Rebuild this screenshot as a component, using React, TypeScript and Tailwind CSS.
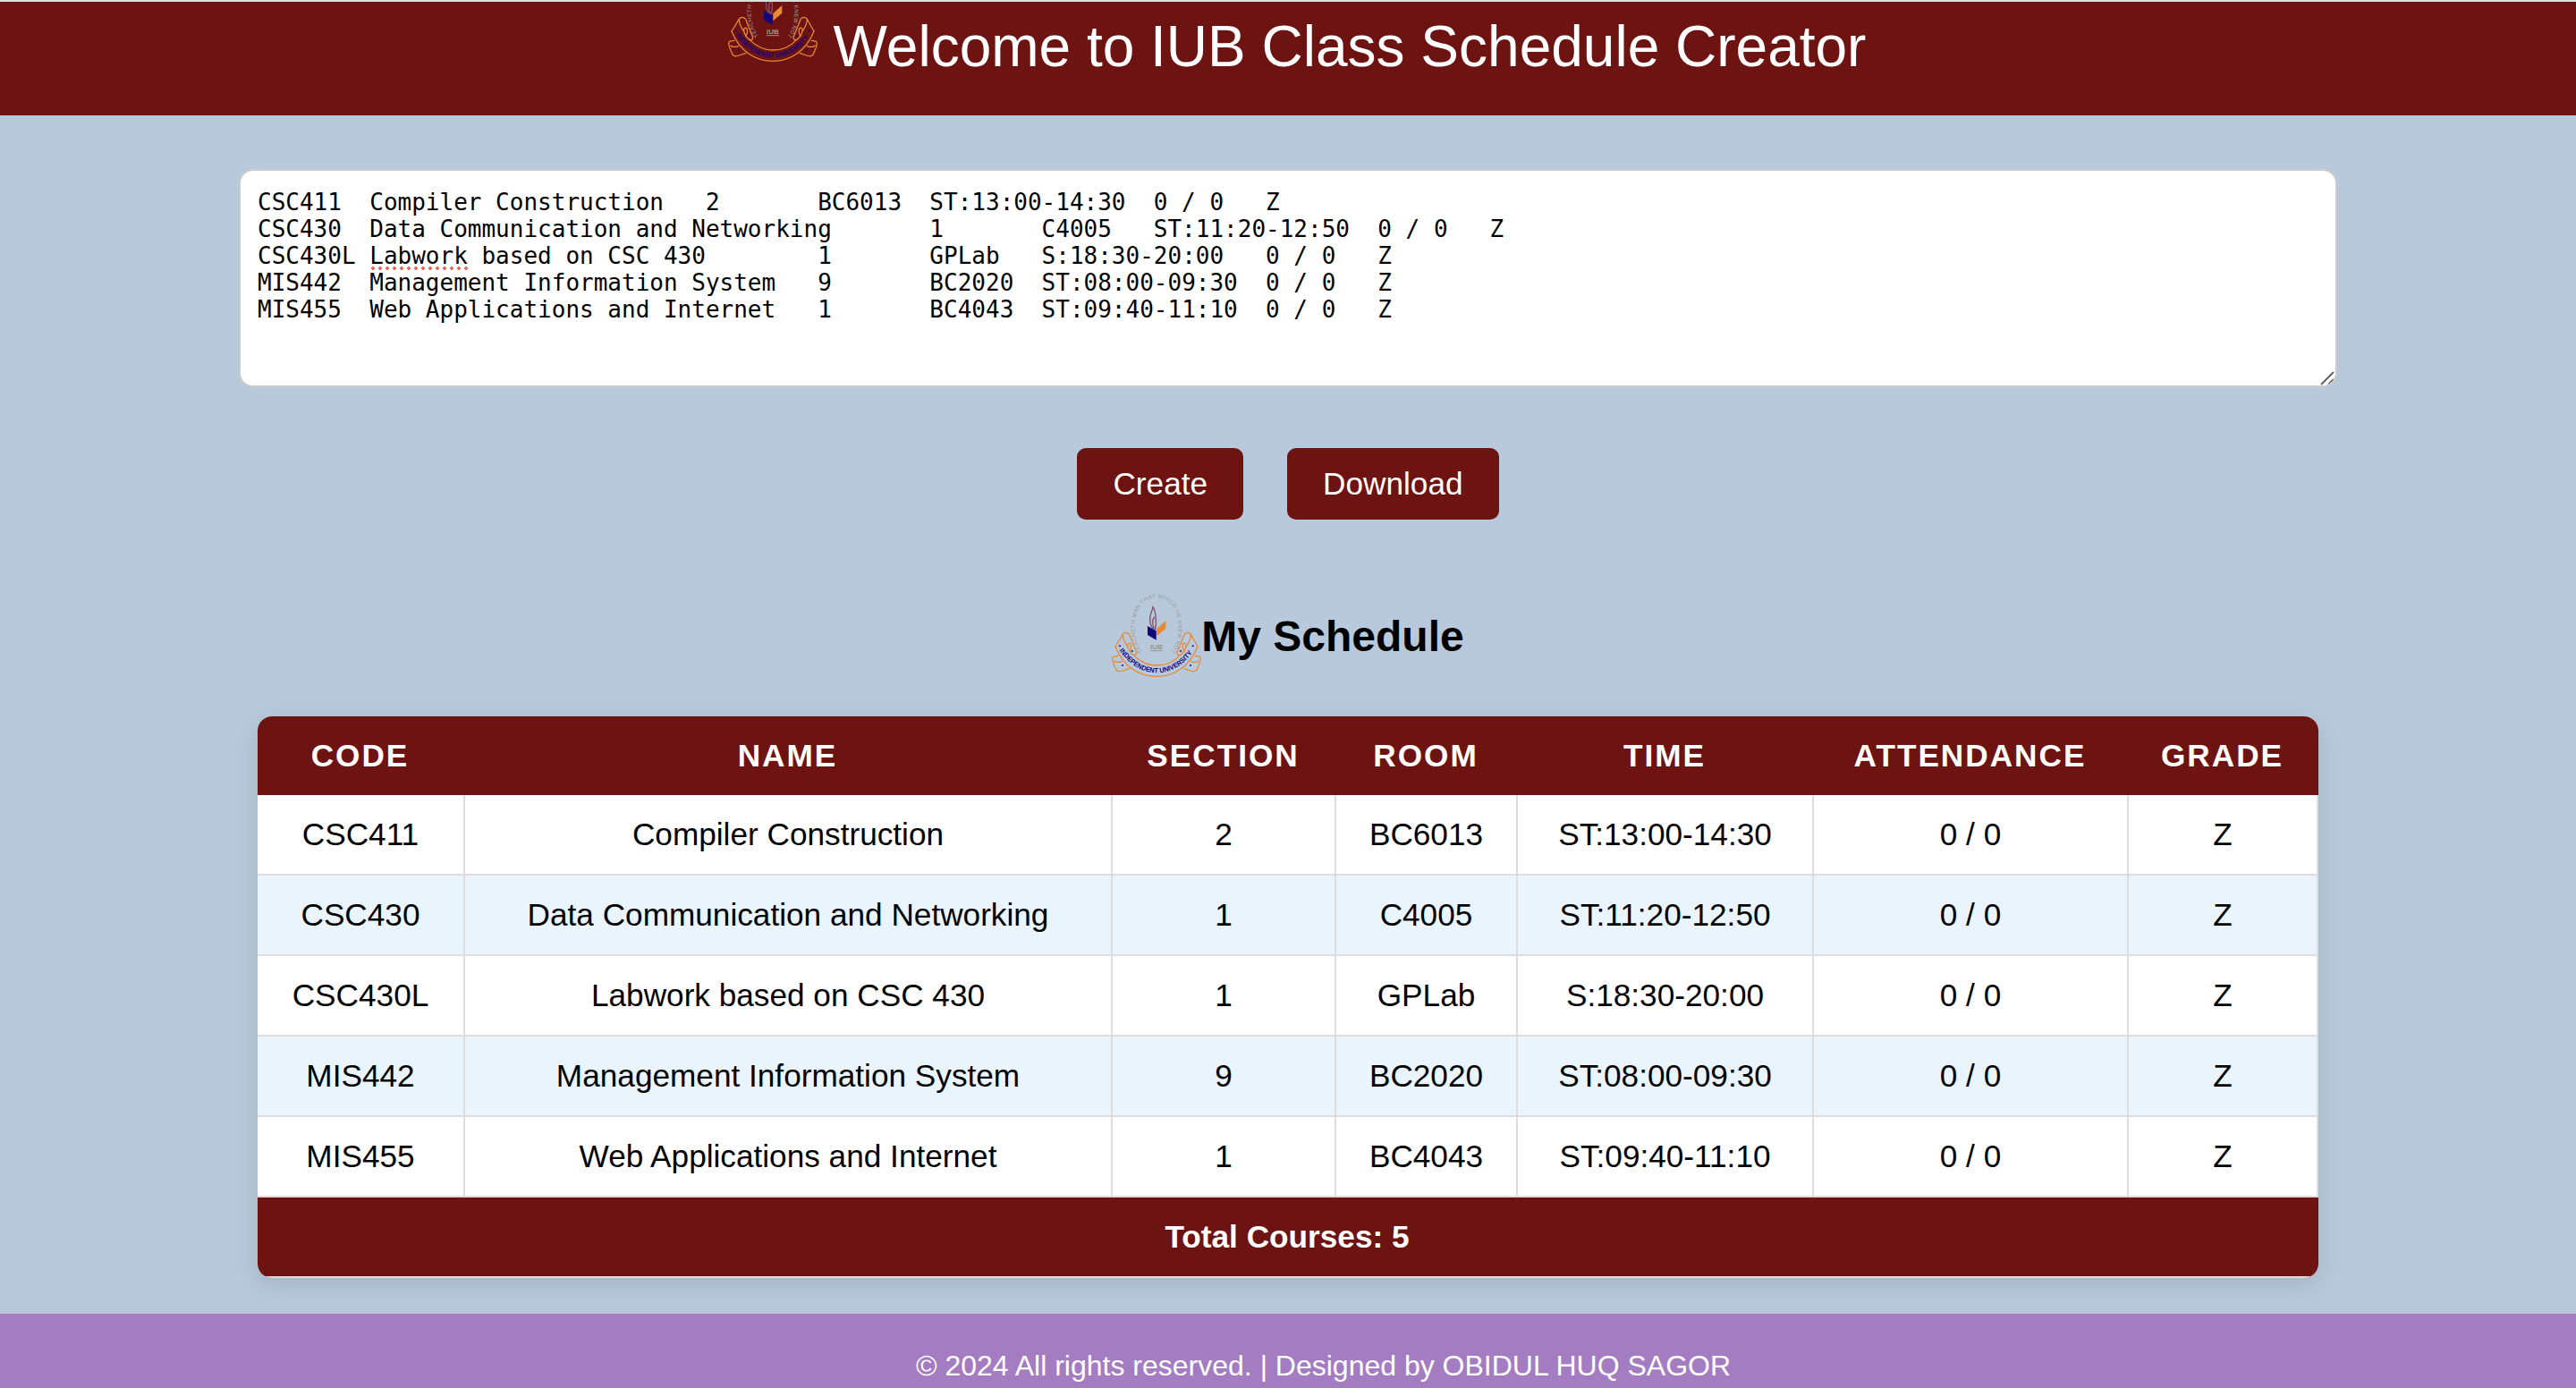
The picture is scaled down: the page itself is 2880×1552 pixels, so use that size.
import { useId } from "react";

const pasted = [
  ["CSC411", "Compiler Construction", "2", "BC6013", "ST:13:00-14:30", "0 / 0", "Z"],
  ["CSC430", "Data Communication and Networking", "1", "C4005", "ST:11:20-12:50", "0 / 0", "Z"],
  ["CSC430L", "Labwork based on CSC 430", "1", "GPLab", "S:18:30-20:00", "0 / 0", "Z"],
  ["MIS442", "Management Information System", "9", "BC2020", "ST:08:00-09:30", "0 / 0", "Z"],
  ["MIS455", "Web Applications and Internet", "1", "BC4043", "ST:09:40-11:10", "0 / 0", "Z"],
];

const headings = ["Code", "Name", "Section", "Room", "Time", "Attendance", "Grade"];

function Crest({ className }: { className: string }) {
  const id = useId();
  return (
    <svg viewBox="69 39 300 279" className={className} fill="none">
      <defs>
        <path id={`${id}-motto`} d="M172 231 C134 195 130 52 219 54 C308 52 304 195 267 233" />
        <path id={`${id}-name`} d="M94 229 Q150 304 220 304 Q290 304 344 231" />
      </defs>
      <text fill="#9a9c9f" fontSize="19" fontFamily="Liberation Sans, sans-serif">
        <textPath href={`#${id}-motto`} textLength="446" lengthAdjust="spacing">
          TEACHETH MAN THAT WHICH HE KNEW NOT
        </textPath>
      </text>
      <path d="M207 83 C205 98 195 108 197 128 C198 144 206 155 215 157 C219 140 218 98 207 83Z M210 152 C204 138 206 124 212 116" stroke="#80506f" strokeWidth="4" />
      <path d="M189 147 L218 163 V194 L189 177Z" fill="#14067c" />
      <path d="M220 156 L250 129 V155 L220 181Z" fill="#e58a35" />
      <text x="219" y="224" textAnchor="middle" fill="#929698" fontSize="21" fontWeight="700" fontFamily="Liberation Sans, sans-serif" textLength="42" lengthAdjust="spacingAndGlyphs">
        IUB
      </text>
      <path d="M198 230 H240" stroke="#929698" strokeWidth="3" />
      <g stroke="#e58a35" strokeWidth="3.8" strokeLinejoin="round" strokeLinecap="round">
        <path d="M81 216 L106 175 C112 166 128 168 130 181 L152 236 C153 243 148 246 141 244" />
        <path d="M106 175 C106 190 112 203 122 216 C126 230 134 240 141 244" />
        <path d="M122 216 C120 204 130 200 133 210 C135 220 131 228 128 231" />
        <path d="M357 216 L334 175 C328 166 312 168 310 181 L288 236 C287 243 292 246 299 244" />
        <path d="M334 175 C334 190 328 203 318 216 C314 230 306 240 299 244" />
        <path d="M318 216 C320 204 310 200 307 210 C305 220 309 228 312 231" />
        <path d="M81 216 C108 283 160 316 219 316 C278 316 330 283 357 216" />
        <path d="M141 244 C165 268 190 279 219 279 C250 279 277 268 299 244" />
        <path d="M90 247 L73 250 C68 257 72 266 76 276 L84 294 C90 302 98 300 106 297 L129 289 M78 264 C84 272 96 268 104 266" />
        <path d="M349 247 L365 250 C370 257 366 266 362 276 L354 294 C348 302 340 300 332 297 L310 289 M360 264 C354 272 342 268 334 266" />
      </g>
      <g fill="#14067c">
        <circle cx="96" cy="214" r="3" />
        <circle cx="137" cy="231" r="3" />
        <circle cx="105" cy="279" r="3" />
        <circle cx="341" cy="214" r="3" />
        <circle cx="300" cy="231" r="3" />
        <circle cx="333" cy="279" r="3" />
      </g>
      <text fill="#14067c" fontSize="23" fontWeight="700" fontFamily="Liberation Sans, sans-serif">
        <textPath href={`#${id}-name`} textLength="294" lengthAdjust="spacingAndGlyphs">
          INDEPENDENT UNIVERSITY
        </textPath>
      </text>
    </svg>
  );
}

function PastedLine({ cells }: { cells: string[] }) {
  const line = cells.join("\t");
  const at = line.indexOf("Labwork");
  if (at < 0) return <div>{line}</div>;
  return (
    <div>
      {line.slice(0, at)}
      <span className="relative">
        Labwork
        <span className="absolute -bottom-[1px] left-0 h-1 w-full bg-[radial-gradient(circle_at_center,#f0675f_1.6px,transparent_2.1px)] bg-[length:8px_4px]" />
      </span>
      {line.slice(at + 7)}
    </div>
  );
}

export default function App() {
  return (
    <div className="flex h-[1552px] w-[2880px] flex-col overflow-hidden bg-[#b8c9db] font-['Liberation_Sans',Arial,sans-serif] text-black">
      <header className="flex h-[129px] shrink-0 items-start justify-center overflow-hidden border-t-2 border-[#dddddd] bg-[#6d1312] pl-[20px]">
        <Crest className="-mt-[26px] h-[93px] w-[100px] shrink-0" />
        <h1 className="ml-[18px] mt-[13px] whitespace-nowrap text-[64px] leading-[74px] text-white">
          Welcome to IUB Class Schedule Creator
        </h1>
      </header>

      <main className="flex shrink-0 flex-col items-center">
        <div className="relative mt-[60px] h-[244px] w-[2346px] overflow-hidden rounded-[16px] border-2 border-[#cccccc] bg-white px-[18px] py-[20px]">
          <div className="whitespace-pre pl-px font-['DejaVu_Sans_Mono',monospace] text-[26px] leading-[30px] [tab-size:8]">
            {pasted.map((cells) => (
              <PastedLine key={cells[0]} cells={cells} />
            ))}
          </div>
          <svg viewBox="0 0 16 16" className="absolute bottom-0 right-[1px] h-4 w-4" fill="none" stroke="#5f5f5f" strokeWidth="1.8">
            <path d="M1 15 L15 1 M9 15 L15 9" />
          </svg>
        </div>

        <div className="mt-[68px] flex gap-[49px]">
          <button className="h-[80px] rounded-[10px] bg-[#6d1312] px-[40px] text-[35.2px] leading-[40px] text-white">Create</button>
          <button className="h-[80px] rounded-[10px] bg-[#6d1312] px-[40px] text-[35.2px] leading-[40px] text-white">Download</button>
        </div>

        <div className="mt-[82px] flex h-[93px] items-start">
          <Crest className="mt-px h-[93px] w-[100px]" />
          <h2 className="mt-[21px] whitespace-nowrap text-[48px] font-bold leading-[56px]">My Schedule</h2>
        </div>

        <div className="mt-[45px] w-[2304px] overflow-hidden rounded-[16px] bg-white shadow-[0_8px_30px_rgba(0,0,0,0.11)]">
          <table className="w-full table-fixed border-separate border-spacing-0 text-center text-[35.2px] leading-[40px]">
            <colgroup>
              <col className="w-[232px]" />
              <col className="w-[724px]" />
              <col className="w-[250px]" />
              <col className="w-[203px]" />
              <col className="w-[331px]" />
              <col className="w-[352px]" />
              <col className="w-[212px]" />
            </colgroup>
            <thead>
              <tr className="h-[88px] bg-[#6d1312] text-white">
                {headings.map((h) => (
                  <th key={h} className="p-0 pr-[3px] font-bold uppercase tracking-[2px]">{h}</th>
                ))}
              </tr>
            </thead>
            <tbody>
              {pasted.map((cells) => (
                <tr key={cells[0]} className="h-[90px] even:bg-[#eaf4fd]">
                  {cells.map((c, i) => (
                    <td key={i} className="whitespace-nowrap border-b-2 border-r-2 border-[#dddddd] p-0">{c}</td>
                  ))}
                </tr>
              ))}
            </tbody>
            <tfoot>
              <tr className="h-[90px] bg-[#6d1312] text-white">
                <td colSpan={7} className="border-b-2 border-[#dddddd] p-0 pr-[2px] font-bold">Total Courses: 5</td>
              </tr>
            </tfoot>
          </table>
        </div>
      </main>

      <footer className="mt-[40px] flex flex-1 justify-center bg-[#a47cc2] pl-[79px]">
        <p className="mt-[40px] whitespace-nowrap text-[32px] leading-[37px] text-white">
          © 2024 All rights reserved. | Designed by OBIDUL HUQ SAGOR
        </p>
      </footer>
    </div>
  );
}
